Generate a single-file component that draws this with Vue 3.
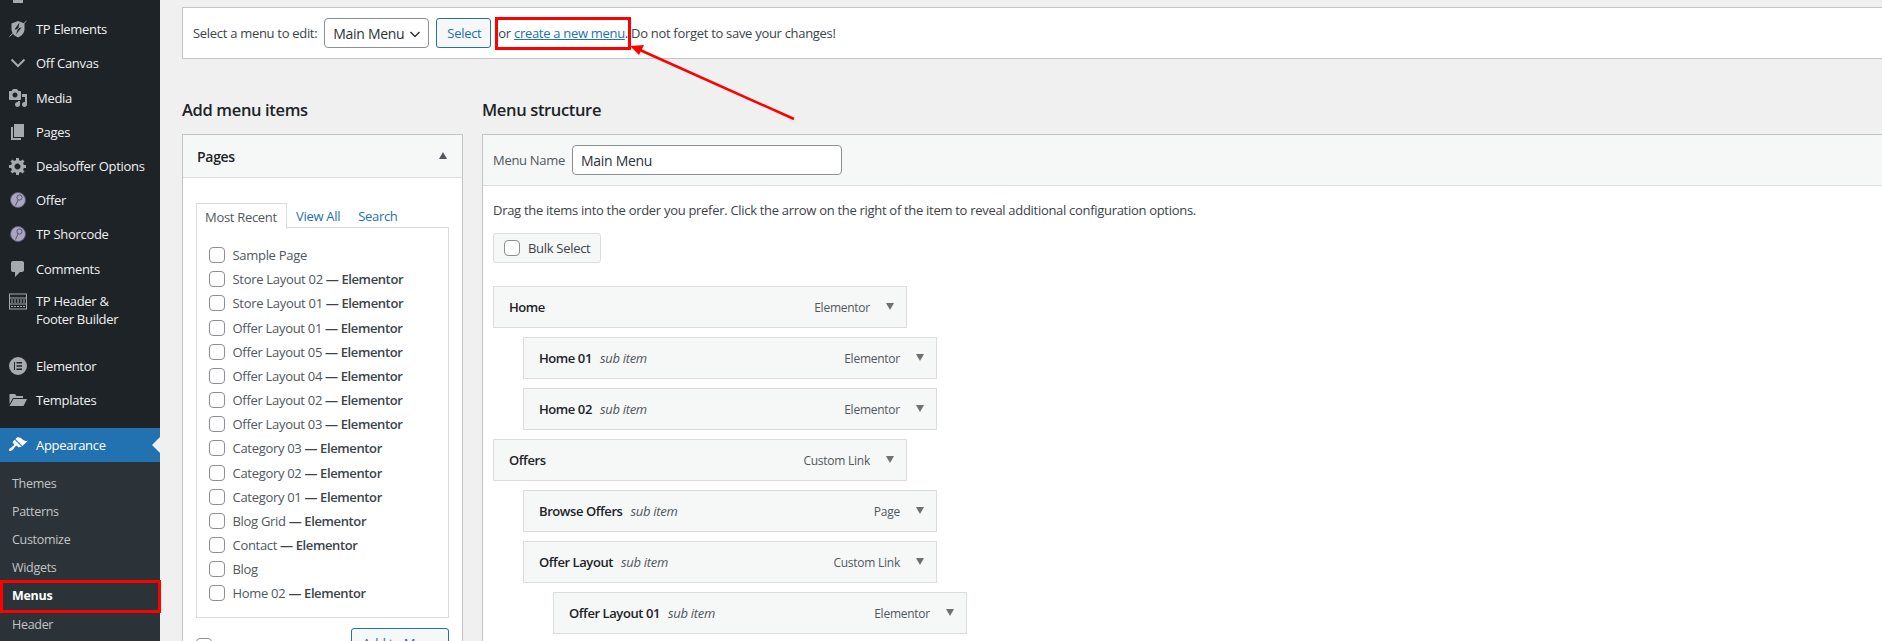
<template>
  <div class="page">
    <aside class="sidebar">
      <ul class="menu">
        <li v-for="item in menuItems" :key="item.id" class="menu-row" :class="item.cls">
          <span class="menu-icon">
            <svg v-if="item.path" width="20" height="20" viewBox="0 0 20 20"><path :d="item.path" fill="currentColor" /></svg>
            <svg v-else-if="item.icon === 'shield'" width="20" height="20" viewBox="0 0 20 20">
              <path d="M3.500 4.500 10 2l6.500 2.500V10c0 4-2.800 7-6.500 8.500C6.300 17 3.500 14 3.500 10z" fill="currentColor" />
              <path d="M11.500 3.500 6.500 10.500h3l-1.500 5 5.500-7h-3z" fill="#1d2327" />
              <path d="M1.500 17.500 18.500 2" stroke="currentColor" stroke-width="1" />
            </svg>
            <svg v-else-if="item.icon === 'chevron'" width="20" height="20" viewBox="0 0 20 20">
              <path d="M3.500 6.500 10 13l6.500-6.500" fill="none" stroke="currentColor" stroke-width="2" />
            </svg>
            <svg v-else-if="item.icon === 'pin'" width="20" height="20" viewBox="0 0 20 20">
              <circle cx="10" cy="10" r="7.500" fill="#a9a6bd" stroke="#5d5880" stroke-width="1" />
              <circle cx="11.500" cy="7.500" r="2.600" fill="none" stroke="#55506f" stroke-width="1" />
              <path d="M10 10 7.500 15.500" stroke="#55506f" stroke-width="1" />
            </svg>
            <svg v-else-if="item.icon === 'grid'" width="20" height="20" viewBox="0 0 20 20">
              <path d="M1 1.500h18v16H1zM2 2.500v3h16v-3zM2 6.500v5h16v-5zM2 12.500v4h16v-4z" fill="currentColor" fill-rule="evenodd" />
              <path d="M3 8h14M3 10h14M3 14.500h14" stroke="currentColor" stroke-width="1" stroke-dasharray="2 1" />
            </svg>
            <svg v-else-if="item.icon === 'elementor'" width="20" height="20" viewBox="0 0 20 20">
              <path d="M10 1a9 9 0 1 0 0 18 9 9 0 0 0 0-18zM7 14H6V6h1zm7 0H8.500v-1.500H14zm0-3.200H8.500V9.200H14zm0-3.300H8.500V6H14z" fill="currentColor" fill-rule="evenodd" />
            </svg>
            <svg v-else-if="item.icon === 'folder'" width="20" height="20" viewBox="0 0 20 20">
              <path d="M1 4h6l1.500 2H15v2H5L1.500 14V4z M5.500 9H19l-3.500 7H1.500z" fill="currentColor" />
            </svg>
          </span>
          <span class="menu-label">{{ item.label }}</span>
        </li>
      </ul>
      <ul class="submenu">
        <li v-for="sub in subItems" :key="sub" class="sub-row" :class="{ current: sub === 'Menus' }">{{ sub }}</li>
      </ul>
    </aside>

    <main class="content">
      <div class="manage-bar">
        <span>Select a menu to edit:</span>
        <span class="select-wrap">
          <select class="menu-select"><option>Main Menu</option></select>
          <svg class="select-chevron" width="12" height="12" viewBox="0 0 12 12"><path d="M1.500 4 6 8.500 10.500 4" fill="none" stroke="#2c3338" stroke-width="1.500" /></svg>
        </span>
        <button class="btn-secondary" type="button">Select</button>
        <span class="manage-note">or <a href="#" class="link">create a new menu</a>. Do not forget to save your changes!</span>
      </div>

      <div class="columns">
        <section class="col-left">
          <h2 class="col-title">Add menu items</h2>
          <div class="panel">
            <div class="pages-head">
              <span class="pages-title">Pages</span>
              <span class="tri-up"></span>
            </div>
            <div class="pages-body">
              <div class="tabs">
                <span class="tab active">Most Recent</span>
                <a href="#" class="tab">View All</a>
                <a href="#" class="tab">Search</a>
              </div>
              <div class="tab-panel">
                <label v-for="page in pages" :key="page.name" class="page-row">
                  <input type="checkbox" class="check" />
                  <span>{{ page.name }}<b v-if="page.el" class="state"> — Elementor</b></span>
                </label>
              </div>
              <div class="pages-foot">
                <input type="checkbox" class="check" />
                <button class="btn-secondary add-btn" type="button">Add to Menu</button>
              </div>
            </div>
          </div>
        </section>

        <section class="col-right">
          <h2 class="col-title">Menu structure</h2>
          <div class="panel structure">
            <div class="name-head">
              <label class="name-label">Menu Name</label>
              <input class="name-input" type="text" value="Main Menu" />
            </div>
            <div class="structure-body">
              <p class="hint">Drag the items into the order you prefer. Click the arrow on the right of the item to reveal additional configuration options.</p>
              <div class="bulk">
                <input type="checkbox" class="check" />
                <span>Bulk Select</span>
              </div>
              <ul class="items">
                <li
                  v-for="row in rows"
                  :key="row.title"
                  class="item"
                  :style="{ marginLeft: row.depth * 30 + 'px' }"
                >
                  <span class="item-title">{{ row.title }}</span>
                  <em v-if="row.depth" class="item-sub">sub item</em>
                  <span class="item-type">{{ row.type }}</span>
                  <span class="tri-down"></span>
                </li>
              </ul>
            </div>
          </div>
        </section>
      </div>
    </main>

    <!-- red annotations on top of the screenshot -->
    <div class="mark mark-menus"></div>
    <div class="mark mark-link"></div>
    <svg class="arrow" width="180" height="90" viewBox="0 0 180 90">
      <path d="M166 74 12 5" stroke="#f00" stroke-width="2.500" fill="none" />
      <path d="M2 1 16 0 11 10z" fill="#f00" />
    </svg>
  </div>
</template>

<script setup>
const menuItems = [
  { id: "top", label: "", path: "M5 2h10v16H5z" },
  { id: "tpe", label: "TP Elements", icon: "shield" },
  { id: "off", label: "Off Canvas", icon: "chevron" },
  {
    id: "media",
    label: "Media",
    path: "M13 11V4c0-.55-.45-1-1-1h-1.670L9 1H5L3.670 3H2c-.55 0-1 .45-1 1v7c0 .55.45 1 1 1h10c.55 0 1-.45 1-1zM7 4.500c1.380 0 2.500 1.120 2.500 2.500S8.380 9.500 7 9.500 4.500 8.380 4.500 7 5.620 4.500 7 4.500zM14 6h5v10.500c0 1.380-1.120 2.500-2.500 2.500S14 17.880 14 16.500s1.120-2.500 2.500-2.500c.17 0 .34.02.5.05V9h-3V6zm-4 8.050V13h2v3.500c0 1.380-1.120 2.500-2.500 2.500S7 17.880 7 16.500 8.120 14 9.500 14c.17 0 .34.02.5.05z",
  },
  { id: "pages", label: "Pages", path: "M6 15V2h10v13H6zm-1 1h8v2H3V5h2v11z" },
  {
    id: "deals",
    label: "Dealsoffer Options",
    path: "M18 12h-2.180c-.17.7-.44 1.350-.81 1.930l1.540 1.540-2.100 2.100-1.540-1.540c-.58.36-1.230.63-1.910.79V19H8v-2.180c-.68-.16-1.330-.43-1.910-.79l-1.540 1.540-2.120-2.120 1.540-1.540c-.36-.58-.63-1.230-.79-1.910H1V9.030h2.170c.16-.7.44-1.350.8-1.940L2.430 5.550l2.100-2.100 1.540 1.540c.58-.37 1.240-.64 1.930-.81V2h3v2.180c.68.16 1.330.43 1.910.79l1.540-1.540 2.120 2.120-1.540 1.540c.36.59.64 1.240.8 1.940H18V12zm-8.500 1.500c1.660 0 3-1.340 3-3s-1.340-3-3-3-3 1.340-3 3 1.340 3 3 3z",
  },
  { id: "offer", label: "Offer", icon: "pin" },
  { id: "short", label: "TP Shorcode", icon: "pin" },
  { id: "comments", label: "Comments", path: "M5 2h9c1.100 0 2 .9 2 2v7c0 1.100-.9 2-2 2h-2l-5 5v-5H5c-1.100 0-2-.9-2-2V4c0-1.100.9-2 2-2z" },
  { id: "header", label: "TP Header & Footer Builder", icon: "grid", cls: "tall" },
  { id: "elementor", label: "Elementor", icon: "elementor" },
  { id: "templates", label: "Templates", icon: "folder", cls: "last" },
  {
    id: "appearance",
    label: "Appearance",
    cls: "active",
    path: "M14.480 11.060L7.410 3.990l1.500-1.500c.5-.56 2.300-.47 3.510.32 1.210.8 1.430 1.280 2.910 2.100 1.180.64 2.450 1.260 4.450.85zm-.71.71L6.700 4.700 4.930 6.470c-.39.39-.39 1.020 0 1.410l1.060 1.060c.39.39.39 1.030 0 1.420-.6.6-1.430 1.110-2.210 1.690-.35.26-.7.53-1.010.84C1.430 13.230.4 14.840 1.300 15.740c.9.9 2.510-.13 3.850-1.470.31-.31.58-.66.85-1.010.57-.78 1.080-1.610 1.680-2.210.39-.39 1.030-.39 1.420 0l1.060 1.060c.39.39 1.020.39 1.410 0z",
  },
];

const subItems = ["Themes", "Patterns", "Customize", "Widgets", "Menus", "Header"];

const pages = [
  { name: "Sample Page" },
  { name: "Store Layout 02", el: true },
  { name: "Store Layout 01", el: true },
  { name: "Offer Layout 01", el: true },
  { name: "Offer Layout 05", el: true },
  { name: "Offer Layout 04", el: true },
  { name: "Offer Layout 02", el: true },
  { name: "Offer Layout 03", el: true },
  { name: "Category 03", el: true },
  { name: "Category 02", el: true },
  { name: "Category 01", el: true },
  { name: "Blog Grid", el: true },
  { name: "Contact", el: true },
  { name: "Blog" },
  { name: "Home 02", el: true },
];

const rows = [
  { title: "Home", type: "Elementor", depth: 0 },
  { title: "Home 01", type: "Elementor", depth: 1 },
  { title: "Home 02", type: "Elementor", depth: 1 },
  { title: "Offers", type: "Custom Link", depth: 0 },
  { title: "Browse Offers", type: "Page", depth: 1 },
  { title: "Offer Layout", type: "Custom Link", depth: 1 },
  { title: "Offer Layout 01", type: "Elementor", depth: 2 },
];
</script>

<style>
html,
body {
  margin: 0;
  background: #f0f0f1;
  overflow: hidden;
}
</style>

<style scoped>
.page {
  position: relative;
  display: flex;
  height: 641px;
  overflow: hidden;
  background: #f0f0f1;
  color: #3c434a;
  font-family: "Open Sans", "Noto Sans", sans-serif;
  font-size: 13px;
  letter-spacing: -0.3px;
}

ul {
  list-style: none;
  margin: 0;
  padding: 0;
}

.sidebar {
  flex: 0 0 160px;
  background: #1d2327;
  color: #f0f0f1;
  margin-top: -22px;
}

.menu-row {
  display: flex;
  align-items: center;
  height: 34.2px;
  padding-left: 8px;
}

.menu-row.tall {
  height: 63px;
  align-items: flex-start;
  padding-top: 6px;
  box-sizing: border-box;
  line-height: 18px;
}

.menu-row.tall .menu-label {
  width: 100px;
}

.menu-row.last {
  margin-bottom: 11px;
}

.menu-row.active {
  position: relative;
  background: #2271b1;
  color: #fff;
  height: 34px;
}

.menu-row.active::after {
  content: "";
  position: absolute;
  right: 0;
  top: 9px;
  border: 8px solid transparent;
  border-right-color: #f0f0f1;
  border-left-width: 0;
}

.menu-icon {
  flex: 0 0 28px;
  display: flex;
  color: #a7aaad;
}

.active .menu-icon {
  color: #fff;
}

.menu-label {
  width: 118px;
}

.submenu {
  background: #2c3338;
  padding-top: 8px;
  height: 200px;
}

.sub-row {
  height: 28.1px;
  line-height: 28px;
  padding-left: 12px;
  color: #c3c4c7;
  font-size: 12.500px;
}

.sub-row.current {
  color: #fff;
  font-weight: 700;
}

.content {
  flex: 1;
  min-width: 0;
  padding-left: 22px;
  margin-right: -20px;
}

.manage-bar {
  display: flex;
  align-items: center;
  height: 52px;
  box-sizing: border-box;
  margin-top: 7px;
  padding-left: 10px;
  background: #fff;
  border: 1px solid #c3c4c7;
}

.select-wrap {
  position: relative;
  display: flex;
  margin-left: 7px;
}

.menu-select {
  appearance: none;
  width: 105px;
  height: 30px;
  padding: 0 8px;
  background: #fff;
  border: 1px solid #8c8f94;
  border-radius: 4px;
  color: #2c3338;
  font: inherit;
  letter-spacing: inherit;
  font-size: 14px;
}

.select-chevron {
  position: absolute;
  right: 8px;
  top: 10px;
}

.btn-secondary {
  height: 30px;
  padding: 0 10px;
  background: #f6f7f7;
  border: 1px solid #2271b1;
  border-radius: 3px;
  color: #2271b1;
  font: inherit;
  letter-spacing: inherit;
}

.manage-bar .btn-secondary {
  margin-left: 7px;
  width: 55px;
}

.manage-note {
  margin-left: 7px;
}

.link {
  color: #2271b1;
  text-decoration: underline;
}

.columns {
  display: flex;
  gap: 19px;
  margin-top: 39px;
}

.col-left {
  flex: 0 0 281px;
}

.col-right {
  flex: 1;
  min-width: 0;
}

.col-title {
  margin: 0 0 12px;
  height: 24px;
  line-height: 24px;
  color: #1d2327;
  font-size: 16.500px;
  font-weight: 600;
  letter-spacing: -0.35px;
}

.panel {
  background: #fff;
  border: 1px solid #c3c4c7;
}

.pages-head {
  display: flex;
  align-items: center;
  justify-content: space-between;
  height: 42px;
  padding: 0 15px 0 14px;
  background: #f6f7f7;
  border-bottom: 1px solid #dcdcde;
}

.pages-title {
  color: #1d2327;
  font-size: 14px;
  font-weight: 600;
}

.tri-up {
  border: 4.500px solid transparent;
  border-bottom: 7px solid #50575e;
  border-top-width: 0;
  margin-top: -2px;
}

.pages-body {
  padding: 25px 13px 0;
}

.tabs {
  display: flex;
  height: 25px;
}

.tab {
  padding: 0 9px;
  line-height: 26px;
  color: #2271b1;
  text-decoration: none;
}

.tab.active {
  position: relative;
  z-index: 1;
  width: 73px;
  height: 25px;
  padding: 0 8px;
  background: #fff;
  color: #50575e;
  border: 1px solid #dcdcde;
  border-bottom: 0;
}

.tab-panel {
  padding: 15px 12px 0 11.500px;
  height: 374px;
  border: 1px solid #dcdcde;
  margin-top: -1px;
}

.page-row {
  display: flex;
  align-items: center;
  height: 24.180px;
  color: #50575e;
}

.state {
  color: #3c434a;
  font-weight: 600;
  letter-spacing: -0.38px;
}

.check {
  appearance: none;
  flex: 0 0 16px;
  width: 16px;
  height: 16px;
  margin: 0 8px 0 0;
  background: #fff;
  border: 1px solid #8c8f94;
  border-radius: 4px;
}

.pages-foot {
  display: flex;
  justify-content: space-between;
  align-items: flex-start;
  margin-top: 10px;
}

.pages-foot .check {
  margin-top: 10px;
}

.add-btn {
  width: 98px;
}

.name-head {
  display: flex;
  align-items: center;
  height: 50px;
  padding-left: 10px;
  background: #f6f7f7;
  border-bottom: 1px solid #dcdcde;
}

.name-label {
  width: 79px;
  color: #50575e;
}

.name-input {
  width: 270px;
  height: 30px;
  box-sizing: border-box;
  padding: 0 8px;
  border: 1px solid #8c8f94;
  border-radius: 4px;
  color: #2c3338;
  font: inherit;
  letter-spacing: inherit;
  font-size: 14px;
}

.structure-body {
  padding: 0 10px;
}

.hint {
  margin: 0;
  padding-top: 14px;
  line-height: 20px;
}

.bulk {
  display: inline-flex;
  align-items: center;
  box-sizing: border-box;
  width: 108px;
  height: 30px;
  margin-top: 13px;
  padding-left: 10px;
  background: #f6f7f7;
  border: 1px solid #dcdcde;
  border-radius: 3px;
  vertical-align: top;
}

.items {
  margin-top: 23px;
}

.item {
  display: flex;
  align-items: center;
  box-sizing: border-box;
  width: 414px;
  height: 42px;
  margin-bottom: 9px;
  padding: 0 12px 0 15px;
  background: #f6f7f7;
  border: 1px solid #dcdcde;
  color: #50575e;
}

.item-title {
  color: #1d2327;
  font-weight: 600;
  letter-spacing: -0.42px;
}

.item-sub {
  margin-left: 8px;
}

.item-type {
  margin-left: auto;
  margin-right: 16px;
  font-size: 12px;
  letter-spacing: -0.25px;
}

.tri-down {
  border: 4.500px solid transparent;
  border-top: 7px solid #6f6f75;
  border-bottom-width: 0;
  margin-top: -2px;
}

.mark {
  position: absolute;
  box-sizing: border-box;
  border: 3px solid #f00;
  pointer-events: none;
}

.mark-menus {
  left: 0;
  top: 580px;
  width: 161px;
  height: 33px;
}

.mark-link {
  left: 495px;
  top: 17px;
  width: 136px;
  height: 33px;
}

.arrow {
  position: absolute;
  left: 628px;
  top: 45px;
  pointer-events: none;
}
</style>
